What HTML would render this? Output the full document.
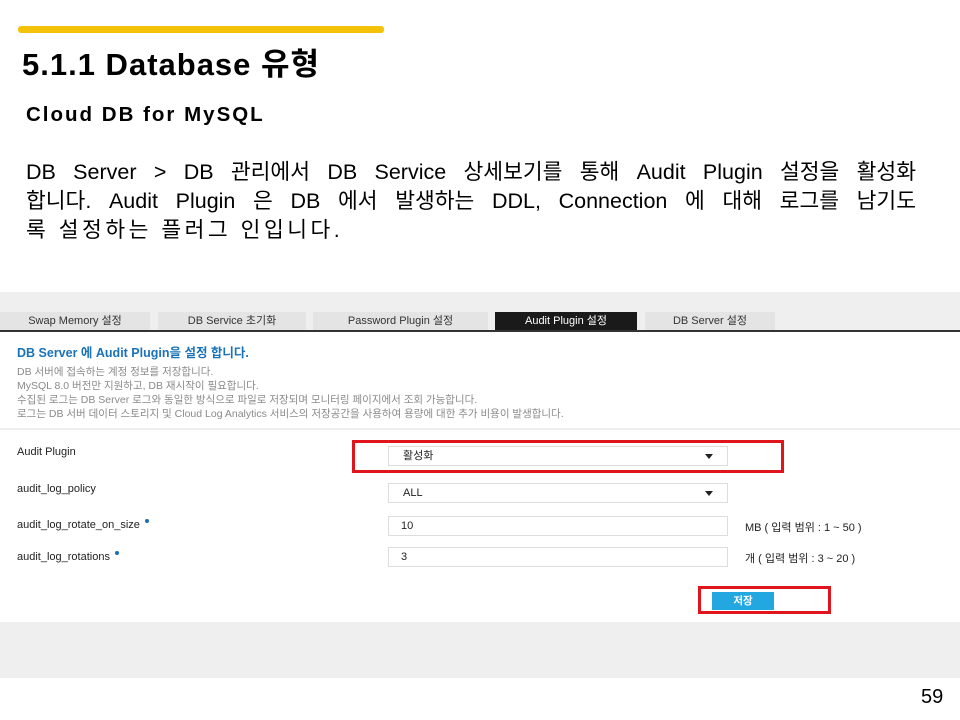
<!DOCTYPE html>
<html><head><meta charset="utf-8"><style>
*{margin:0;padding:0;box-sizing:border-box}
body{width:960px;height:720px;background:#fff;position:relative;overflow:hidden;font-family:"Liberation Sans","Noto Sans CJK KR",sans-serif;color:#000}
.a{position:absolute;white-space:nowrap}
.bar{left:18px;top:26px;width:366px;height:7px;background:#f5c20a;border-radius:3px}
h1{position:absolute;left:22px;top:42px;font-size:31px;font-weight:bold;letter-spacing:1px;line-height:46px;white-space:nowrap}
h2{position:absolute;left:26px;top:100px;font-size:20.5px;font-weight:bold;letter-spacing:2px;line-height:30px;white-space:nowrap}
.pl{position:absolute;left:26px;width:890px;font-size:21.5px;line-height:29px;height:29px;text-align:justify;text-align-last:justify;overflow:hidden}
.shot{position:absolute;left:0;top:292px;width:960px;height:386px;background:#efefef}
.tab{position:absolute;top:20px;height:18px;background:#e4e4e4;font-size:11px;color:#333;text-align:center;line-height:18px}
.tab.on{background:#1a1a1a;color:#fff}
.line{position:absolute;left:0;top:38px;width:960px;height:2px;background:#333}
.white{position:absolute;left:0;top:40px;width:960px;height:290px;background:#fff}
.g{font-size:10.5px;color:#8a8a8a;line-height:14px}
.lbl{font-size:11px;color:#222}
.in{position:absolute;left:388px;width:340px;height:20px;border:1px solid #ddd;background:#fff;font-size:11px;padding-left:14px;line-height:18px;color:#222}
.tri{position:absolute;right:14px;top:7px;width:0;height:0;border-left:4px solid transparent;border-right:4px solid transparent;border-top:5px solid #222}
.red{position:absolute;border:3px solid #e0141b}
.dot{display:inline-block;width:4px;height:4px;border-radius:50%;background:#1b6fb5;margin-left:5px;vertical-align:5px}
</style></head><body>
<div class="a bar"></div>
<h1>5.1.1 Database 유형</h1>
<h2>Cloud DB for MySQL</h2>
<div class="pl" style="top:158px">DB Server &gt; DB 관리에서 DB Service 상세보기를 통해 Audit Plugin 설정을 활성화</div>
<div class="pl" style="top:187px">합니다. Audit Plugin 은 DB 에서 발생하는 DDL, Connection 에 대해 로그를 남기도</div>
<div class="a" style="left:26px;top:216px;font-size:21.5px;letter-spacing:3.5px;line-height:29px">록 설정하는 플러그 인입니다.</div>
<div class="shot">
 <div class="tab" style="left:0;width:150px">Swap Memory 설정</div>
 <div class="tab" style="left:158px;width:148px">DB Service 초기화</div>
 <div class="tab" style="left:313px;width:175px">Password Plugin 설정</div>
 <div class="tab on" style="left:495px;width:142px">Audit Plugin 설정</div>
 <div class="tab" style="left:645px;width:130px">DB Server 설정</div>
 <div class="line"></div>
 <div class="white">
  <div class="a" style="left:17px;top:10px;font-size:12.5px;font-weight:bold;color:#1a73b8">DB Server 에 Audit Plugin을 설정 합니다.</div>
  <div class="a g" style="left:17px;top:33px">DB 서버에 접속하는 계정 정보를 저장합니다.<br>MySQL 8.0 버전만 지원하고, DB 재시작이 필요합니다.<br>수집된 로그는 DB Server 로그와 동일한 방식으로 파일로 저장되며 모니터링 페이지에서 조회 가능합니다.<br>로그는 DB 서버 데이터 스토리지 및 Cloud Log Analytics 서비스의 저장공간을 사용하여 용량에 대한 추가 비용이 발생합니다.</div>
  <div class="a" style="left:0;top:96px;width:960px;height:2px;background:#eee"></div>
  <div class="a lbl" style="left:17px;top:114px">Audit Plugin</div>
  <div class="a lbl" style="left:17px;top:151px">audit_log_policy</div>
  <div class="a lbl" style="left:17px;top:187px">audit_log_rotate_on_size<span class="dot"></span></div>
  <div class="a lbl" style="left:17px;top:219px">audit_log_rotations<span class="dot"></span></div>
  <div class="in" style="top:114px">활성화<span class="tri"></span></div>
  <div class="in" style="top:151px">ALL<span class="tri"></span></div>
  <div class="in" style="top:184px;padding-left:12px">10</div>
  <div class="in" style="top:215px;padding-left:12px">3</div>
  <div class="a lbl" style="left:745px;top:187px">MB ( 입력 범위 : 1 ~ 50 )</div>
  <div class="a lbl" style="left:745px;top:218px">개 ( 입력 범위 : 3 ~ 20 )</div>
  <div class="red" style="left:352px;top:108px;width:432px;height:33px"></div>
  <div class="a" style="left:712px;top:260px;width:62px;height:18px;background:#22a7e0;color:#fff;font-size:10.5px;font-weight:bold;text-align:center;line-height:18px">저장</div>
  <div class="red" style="left:698px;top:254px;width:133px;height:28px"></div>
 </div>
</div>
<div class="a" style="left:921px;top:686px;font-size:20px">59</div>
</body></html>
